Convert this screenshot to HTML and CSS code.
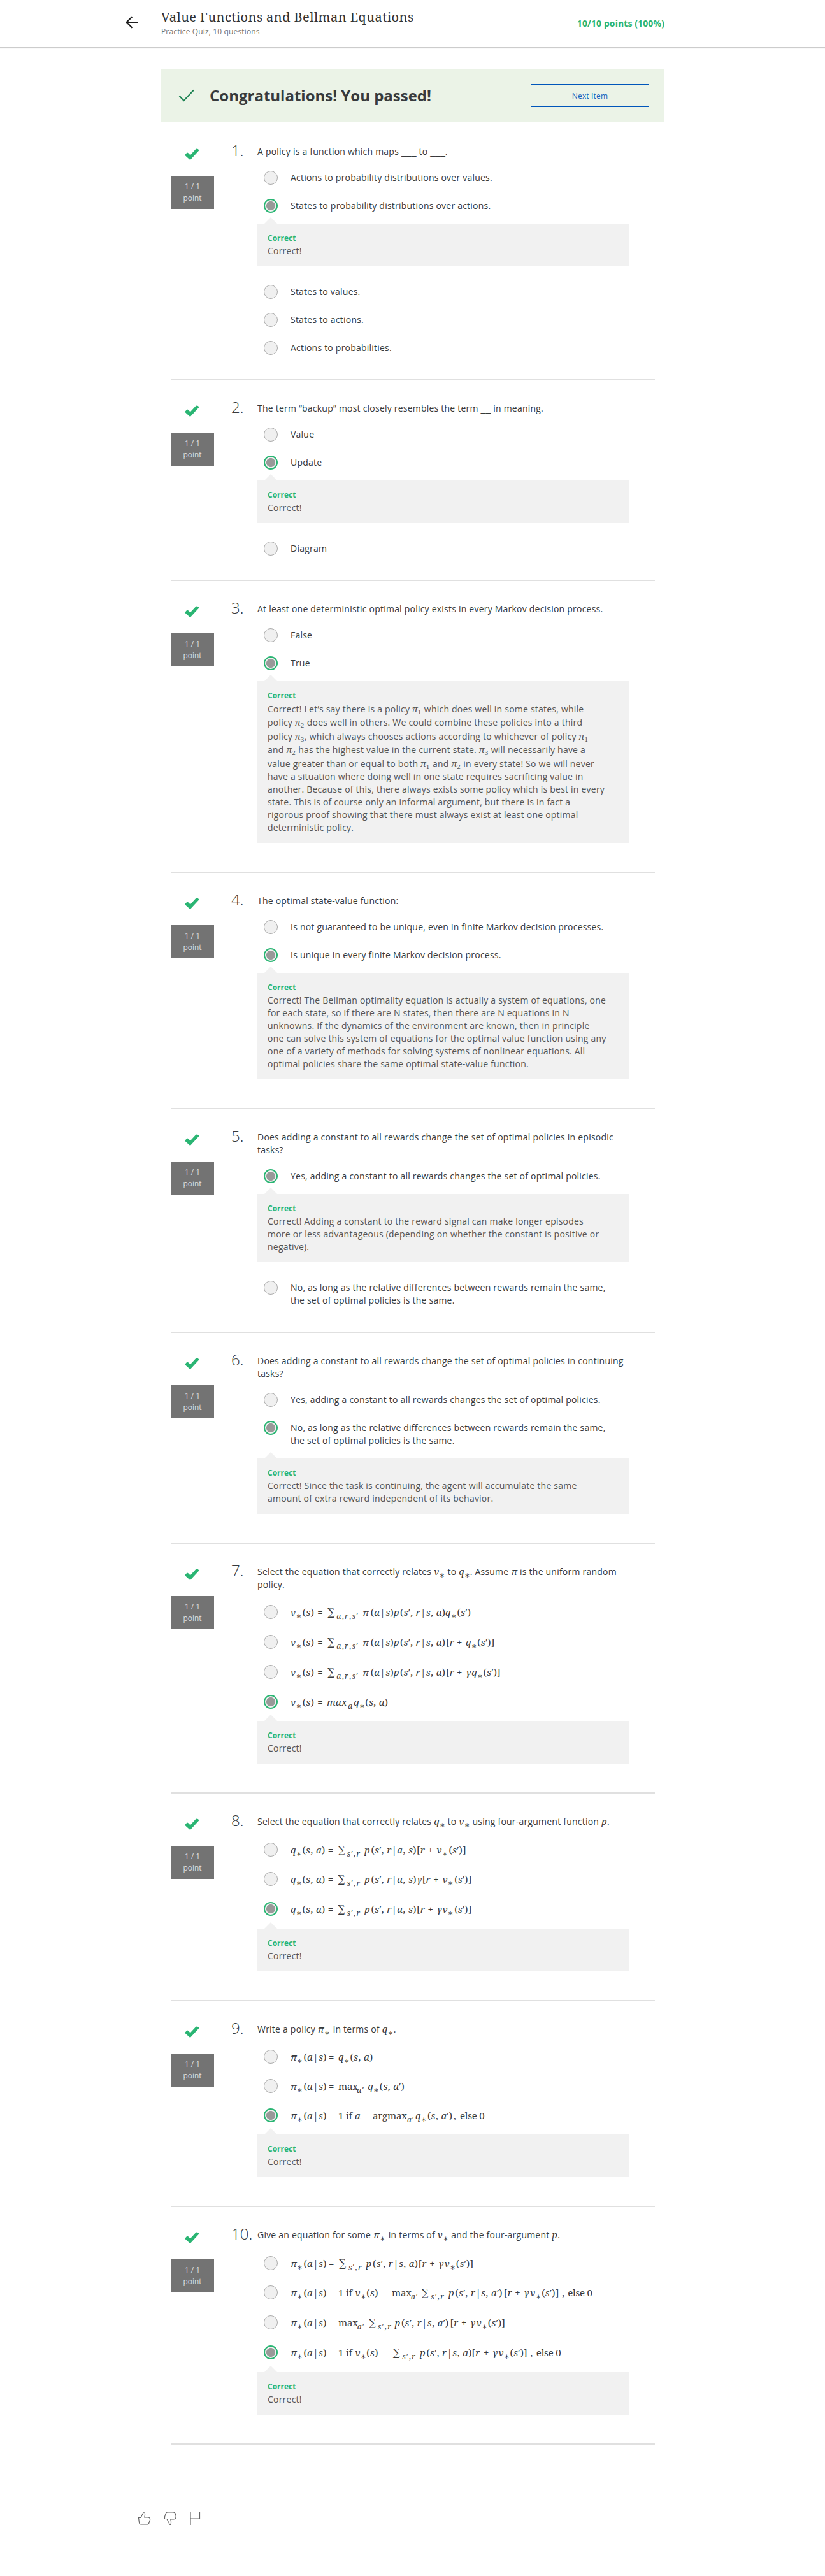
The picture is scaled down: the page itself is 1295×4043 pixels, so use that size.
FILE: index.html
```html
<!DOCTYPE html>
<html lang="en">
<head>
<meta charset="utf-8">
<title>Value Functions and Bellman Equations</title>
<link rel="stylesheet" href="styles.css">
</head>
<body>
<svg class="defs" aria-hidden="true">
  <symbol id="tick" viewBox="0 0 23 18"><path d="M0 10.5 3.6 6.6 Q5 6.2 8.6 10.6 L17.4 1 Q19.6-.4 22.8 2.8 L9.6 17 Q8.4 18 7.2 17 Z"/></symbol>
</svg>
<header class="top">
  <svg class="back" width="21" height="20" viewBox="0 0 21 20"><path d="M20 10H2M10.5 1.2 1.7 10l8.800 8.800" fill="none" stroke="#1f1f1f" stroke-width="2.200"/></svg>
  <div class="heading">
    <h1>Value Functions and Bellman Equations</h1>
    <p>Practice Quiz, 10 questions</p>
  </div>
  <div class="score">10/10 points (100%)</div>
</header>
<main>
<section class="banner">
  <svg width="26" height="20" viewBox="0 0 26 20"><path d="M1.500 10.500 8.500 18 24 1.500" fill="none" stroke="#1f8354" stroke-width="2"/></svg>
  <h2>Congratulations! You passed!</h2>
  <a class="next">Next Item</a>
</section>

<section class="question">
  <div class="grade"><svg class="tick"><use href="#tick"/></svg><div class="points">1 / 1<br>point</div></div>
  <div class="num">1.</div>
  <div class="body">
    <div class="prompt">A policy is a function which maps <span class="blank">___</span> to <span class="blank">___</span>.</div>
    <div class="option"><i></i><span>Actions to probability distributions over values.</span></div>
    <div class="option on"><i></i><span>States to probability distributions over actions.</span></div>
    <div class="feedback"><b>Correct</b><p>Correct!</p></div>
    <div class="option"><i></i><span>States to values.</span></div>
    <div class="option"><i></i><span>States to actions.</span></div>
    <div class="option"><i></i><span>Actions to probabilities.</span></div>
  </div>
</section>

<section class="question">
  <div class="grade"><svg class="tick"><use href="#tick"/></svg><div class="points">1 / 1<br>point</div></div>
  <div class="num">2.</div>
  <div class="body">
    <div class="prompt">The term “backup” most closely resembles the term <span class="blank">__</span> in meaning.</div>
    <div class="option"><i></i><span>Value</span></div>
    <div class="option on"><i></i><span>Update</span></div>
    <div class="feedback"><b>Correct</b><p>Correct!</p></div>
    <div class="option"><i></i><span>Diagram</span></div>
  </div>
</section>

<section class="question">
  <div class="grade"><svg class="tick"><use href="#tick"/></svg><div class="points">1 / 1<br>point</div></div>
  <div class="num">3.</div>
  <div class="body">
    <div class="prompt">At least one deterministic optimal policy exists in every Markov decision process.</div>
    <div class="option"><i></i><span>False</span></div>
    <div class="option on"><i></i><span>True</span></div>
    <div class="feedback"><b>Correct</b><p>Correct! Let’s say there is a policy <span class="pi">π<sub>1</sub></span> which does well in some states, while<br>policy <span class="pi">π<sub>2</sub></span> does well in others. We could combine these policies into a third<br>policy <span class="pi">π<sub>3</sub></span>, which always chooses actions according to whichever of policy <span class="pi">π<sub>1</sub></span><br>and <span class="pi">π<sub>2</sub></span> has the highest value in the current state. <span class="pi">π<sub>3</sub></span> will necessarily have a<br>value greater than or equal to both <span class="pi">π<sub>1</sub></span> and <span class="pi">π<sub>2</sub></span> in every state! So we will never<br>have a situation where doing well in one state requires sacrificing value in<br>another. Because of this, there always exists some policy which is best in every<br>state. This is of course only an informal argument, but there is in fact a<br>rigorous proof showing that there must always exist at least one optimal<br>deterministic policy.</p></div>
  </div>
</section>

<section class="question">
  <div class="grade"><svg class="tick"><use href="#tick"/></svg><div class="points">1 / 1<br>point</div></div>
  <div class="num">4.</div>
  <div class="body">
    <div class="prompt">The optimal state-value function:</div>
    <div class="option"><i></i><span>Is not guaranteed to be unique, even in finite Markov decision processes.</span></div>
    <div class="option on"><i></i><span>Is unique in every finite Markov decision process.</span></div>
    <div class="feedback"><b>Correct</b><p>Correct! The Bellman optimality equation is actually a system of equations, one<br>for each state, so if there are N states, then there are N equations in N<br>unknowns. If the dynamics of the environment are known, then in principle<br>one can solve this system of equations for the optimal value function using any<br>one of a variety of methods for solving systems of nonlinear equations. All<br>optimal policies share the same optimal state-value function.</p></div>
  </div>
</section>

<section class="question">
  <div class="grade"><svg class="tick"><use href="#tick"/></svg><div class="points">1 / 1<br>point</div></div>
  <div class="num">5.</div>
  <div class="body">
    <div class="prompt">Does adding a constant to all rewards change the set of optimal policies in episodic<br>tasks?</div>
    <div class="option on"><i></i><span>Yes, adding a constant to all rewards changes the set of optimal policies.</span></div>
    <div class="feedback"><b>Correct</b><p>Correct! Adding a constant to the reward signal can make longer episodes<br>more or less advantageous (depending on whether the constant is positive or<br>negative).</p></div>
    <div class="option"><i></i><span>No, as long as the relative differences between rewards remain the same,<br>the set of optimal policies is the same.</span></div>
  </div>
</section>

<section class="question">
  <div class="grade"><svg class="tick"><use href="#tick"/></svg><div class="points">1 / 1<br>point</div></div>
  <div class="num">6.</div>
  <div class="body">
    <div class="prompt">Does adding a constant to all rewards change the set of optimal policies in continuing<br>tasks?</div>
    <div class="option"><i></i><span>Yes, adding a constant to all rewards changes the set of optimal policies.</span></div>
    <div class="option on"><i></i><span>No, as long as the relative differences between rewards remain the same,<br>the set of optimal policies is the same.</span></div>
    <div class="feedback"><b>Correct</b><p>Correct! Since the task is continuing, the agent will accumulate the same<br>amount of extra reward independent of its behavior.</p></div>
  </div>
</section>

<section class="question tall">
  <div class="grade"><svg class="tick"><use href="#tick"/></svg><div class="points">1 / 1<br>point</div></div>
  <div class="num">7.</div>
  <div class="body">
    <div class="prompt">Select the equation that correctly relates <span class="tex">v_∗:17.5</span> to <span class="tex">q_∗:17.5</span>. Assume <span class="tex">π:10</span> is the uniform random<br>policy.</div>
    <div class="option"><i></i><span class="tex">v_∗:18.7 (s):23.6 =:16 ∑:14 _a,r,s′:41 π:12.4 (a|s):36 p:10.3 (s′,~r|s,~a):71 q_∗:18.5 (s′):26</span></div>
    <div class="option"><i></i><span class="tex">v_∗:18.7 (s):23.6 =:16 ∑:14 _a,r,s′:41 π:12.4 (a|s):36 p:10.3 (s′,~r|s,~a):72 [r:17 +:14 q_∗:18.2 (s′)]:31</span></div>
    <div class="option"><i></i><span class="tex">v_∗:18.7 (s):23.6 =:16 ∑:14 _a,r,s′:41 π:12.4 (a|s):36 p:10.3 (s′,~r|s,~a):72 [r:17 +:14 γ:9.3 q_∗:18.2 (s′)]:31</span></div>
    <div class="option on"><i></i><span class="tex">v_∗:18.7 (s):23.6 =:15 max:33 _a:9 q_∗:18 (s,~a):36</span></div>
    <div class="feedback"><b>Correct</b><p>Correct!</p></div>
  </div>
</section>

<section class="question tall">
  <div class="grade"><svg class="tick"><use href="#tick"/></svg><div class="points">1 / 1<br>point</div></div>
  <div class="num">8.</div>
  <div class="body">
    <div class="prompt">Select the equation that correctly relates <span class="tex">q_∗:17.5</span> to <span class="tex">v_∗:17.5</span> using four-argument function <span class="tex">p:9</span>.</div>
    <div class="option"><i></i><span class="tex">q_∗:18.5 (s,~a):40.300 =:15.700 ∑:14 _s′,r:27.500 p:10.500 (s′,~r|a,~s):71.500 [r:17.500 +:14.100 v_∗:18.800 (s′)]:31</span></div>
    <div class="option"><i></i><span class="tex">q_∗:18.5 (s,~a):40.300 =:15.700 ∑:14 _s′,r:27.500 p:10.500 (s′,~r|a,~s):71.500 γ:8.800 [r:17.500 +:14.100 v_∗:18.800 (s′)]:31</span></div>
    <div class="option on"><i></i><span class="tex">q_∗:18.5 (s,~a):40.300 =:15.700 ∑:14 _s′,r:27.500 p:10.500 (s′,~r|a,~s):71.500 [r:17.500 +:14.100 γ:8.800 v_∗:18.800 (s′)]:31</span></div>
    <div class="feedback"><b>Correct</b><p>Correct!</p></div>
  </div>
</section>

<section class="question tall short">
  <div class="grade"><svg class="tick"><use href="#tick"/></svg><div class="points">1 / 1<br>point</div></div>
  <div class="num">9.</div>
  <div class="body">
    <div class="prompt">Write a policy <span class="tex">π_∗:20</span> in terms of <span class="tex">q_∗:18</span>.</div>
    <div class="option"><i></i><span class="tex">π_∗:20.5 (a|s):39.500 =:15 q_∗:18.500 (s,~a):36</span></div>
    <div class="option"><i></i><span class="tex">π_∗:20.5 (a|s):39.500 =:15 !max:29.300 _a′:17 q_∗:18.500 (s,~a′):42</span></div>
    <div class="option on"><i></i><span class="tex">π_∗:20.5 (a|s):39.500 =:15 !1~if:26 a:13 =:15 !argmax:54 _a′:13 q_∗:19 (s,~a′):41 !,:10 !else~0:40</span></div>
    <div class="feedback"><b>Correct</b><p>Correct!</p></div>
  </div>
</section>

<section class="question tall">
  <div class="grade"><svg class="tick"><use href="#tick"/></svg><div class="points">1 / 1<br>point</div></div>
  <div class="num">10.</div>
  <div class="body">
    <div class="prompt">Give an equation for some <span class="tex">π_∗:20</span> in terms of <span class="tex">v_∗:17.5</span> and the four-argument <span class="tex">p:9</span>.</div>
    <div class="option"><i></i><span class="tex">π_∗:20.5 (a|s):39.500 =:16.300 ∑:14.600 _s′,r:27.700 p:10.500 (s′,~r|s,~a):71.600 [r:17.500 +:14 γ:9.700 v_∗:18 (s′)]:31</span></div>
    <div class="option"><i></i><span class="tex">π_∗:20.5 (a|s):39.500 =:15 !1~if:26.500 v_∗:17.800 (s):25.200 =:14.600 !max:29.800 _a′:16.700 ∑:14.600 _s′,r:27.800 p:10.400 (s′,~r|s,~a′):76.500 [r:17.500 +:14 γ:9.800 v_∗:18 (s′)]:32 !,:9 !else~0:40</span></div>
    <div class="option"><i></i><span class="tex">π_∗:20.5 (a|s):39.500 =:15 !max:29.800 _a′:18 ∑:14.300 _s′,r:26.500 p:10.400 (s′,~r|s,~a′):76.500 [r:17.500 +:14 γ:9.800 v_∗:18 (s′)]:32</span></div>
    <div class="option on"><i></i><span class="tex">π_∗:20.5 (a|s):39.500 =:15 !1~if:26.500 v_∗:17.800 (s):25.200 =:16.200 ∑:14.600 _s′,r:27.800 p:10.400 (s′,~r|s,~a):71 [r:18.500 +:14 γ:9.600 v_∗:18 (s′)]:32 !,:9.300 !else~0:40</span></div>
    <div class="feedback"><b>Correct</b><p>Correct!</p></div>
  </div>
</section>
</main>
<footer>
  <svg width="21" height="21" viewBox="0 0 21 21"><path d="M1.500 9.500H5L9 1.500Q9.800 0 10.800 1 12.300 3 10.800 9H17q3 .5 2.500 4L18 17.500Q17.300 20 15 20H5Q3 20 2.500 17.500Z"/></svg>
  <svg width="21" height="21" viewBox="0 0 21 21"><path d="M10.800 12H13Q16 12 18 11.500 20 9 18.500 4 17.800 1 15 1H6Q3.700 1 3 3.500L1.500 8V11.500H5L9 19.500Q9.800 21 10.800 20 12.300 18 10.800 12Z"/></svg>
  <svg width="17" height="21" viewBox="0 0 17 21"><path d="M1 21V.5H15.500V11H1"/></svg>
</footer>
<script src="math.js"></script>
</body>
</html>
```
FILE: math.js
```js
// Typesets each .tex element. Terms are separated by spaces and written "text:width";
// "_" starts a subscript, "~" is a space and a leading "!" makes the term upright.
document.querySelectorAll('.tex').forEach(function (node) {
  var terms = node.textContent.trim().split(/\s+/);
  node.textContent = '';
  terms.forEach(function (term) {
    var cut = term.lastIndexOf(':');
    var text = term.slice(0, cut).replace(/~/g, ' ');
    var box = document.createElement('span');
    box.className = 'term';
    box.style.width = term.slice(cut + 1) + 'px';
    if (text[0] === '!') {
      box.className += ' word';
      box.textContent = text.slice(1);
    } else {
      if (text === '∑') box.className += ' sum';
      var parts = text.split('_');
      append(box, parts[0]);
      if (parts[1]) {
        var sub = document.createElement('sub');
        if (parts[1] === '∗') sub.className = 'star';
        append(sub, parts[1]);
        box.appendChild(sub);
      }
    }
    node.appendChild(box);
  });
});

function append(parent, text) {
  (text.match(/[a-zπγ]+|[^a-zπγ]+/g) || []).forEach(function (run) {
    if (/[a-zπγ]/.test(run)) {
      var letter = document.createElement('em');
      letter.textContent = run;
      parent.appendChild(letter);
    } else {
      parent.appendChild(document.createTextNode(run));
    }
  });
}
```
FILE: styles.css
```css
* { box-sizing: border-box; }
body {
  margin: 0;
  background: #fff;
  color: #373a3c;
  font: 14px/20px "Open Sans", sans-serif;
}
h1, h2, p { margin: 0; }
.defs { display: none; }

.top {
  display: flex;
  height: 75px;
  padding: 13px 252px 0 197px;
  border-bottom: 1px solid #ccc;
  box-shadow: 0 1px 1px rgba(0, 0, 0, .12);
}
.back { margin: 12px 35px 0 0; }
.heading { flex: 1; }
.heading h1 {
  font: 400 20px/28px "Noto Serif", "DejaVu Serif Condensed", "DejaVu Serif", serif;
  letter-spacing: .46px;
  color: #333;
}
.heading p { font-size: 12px; line-height: 18px; letter-spacing: .15px; color: #757575; }
.score { margin-top: 14px; font-weight: 700; letter-spacing: .1px; color: #2ab573; }

.banner {
  display: flex;
  align-items: center;
  width: 790px;
  height: 84px;
  margin: 33px 0 2px 253px;
  padding: 0 24px 0 27px;
  background: #ebf3e7;
}
.banner h2 { flex: 1; margin-left: 23px; font-size: 24px; line-height: 30px; }
.next {
  width: 186px;
  height: 36px;
  border: 1px solid #0056bb;
  font-size: 12px;
  line-height: 35px;
  letter-spacing: .15px;
  text-align: center;
  color: #1565c0;
}

.question {
  display: flex;
  width: 760px;
  margin-left: 268px;
  padding: 34px 0 27px;
  border-bottom: 2px solid #e0e0e0;
}
.grade { width: 95px; flex: none; padding-top: 5px; }
.tick { display: block; width: 23px; height: 18px; margin: 0 0 25px 22px; fill: #2ab573; }
.points {
  width: 68px;
  height: 52px;
  padding-top: 8px;
  background: #737373;
  color: #ddd;
  font-size: 12px;
  line-height: 18px;
  text-align: center;
}
.num { width: 41px; flex: none; margin-top: -2px; font-size: 24px; line-height: 20px; font-weight: 300; white-space: nowrap; }
.body { width: 584px; flex: none; letter-spacing: .22px; }
.prompt { padding-bottom: 9px; white-space: nowrap; }
.blank { font-size: 18px; line-height: 0; letter-spacing: 0; }
.option { display: flex; min-height: 44px; padding: 12px 0; white-space: nowrap; }
.option i {
  width: 22px;
  height: 22px;
  margin: -1px 20px -1px 10px;
  flex: none;
  border: 1px solid #aaa;
  border-radius: 50%;
  background: #f0f0f0;
}
.option.on i {
  border: 2px solid #2ab573;
  background: radial-gradient(circle at center, #999 6.600px, #f0f0f0 7.400px) padding-box;
}
.feedback {
  position: relative;
  margin: 6px 0 18px;
  padding: 13px 16px 14px;
  background: #f1f1f1;
  white-space: nowrap;
}
.feedback::before {
  content: "";
  position: absolute;
  left: 11px;
  top: -10px;
  border: solid transparent;
  border-width: 0 10px 10px;
  border-bottom-color: #f1f1f1;
}
.feedback b { display: block; font-size: 12px; letter-spacing: 0; color: #2ab573; }
.feedback p { color: #555; }

.pi { display: inline-block; width: 15px; height: 21.400px; font: italic 17.500px/20px "Liberation Serif", serif; letter-spacing: 0; }
.pi sub { font-size: 11px; font-style: normal; line-height: 0; vertical-align: -3px; }

.tex {
  font: 15px/20px "Noto Serif", "DejaVu Serif Condensed", "DejaVu Serif", serif;
  letter-spacing: .4px;
  white-space: nowrap;
}
.prompt .tex { line-height: 0; }
.term { display: inline-block; height: 20px; line-height: 20px; vertical-align: top; white-space: pre; }
.prompt .term { margin-top: -1px; }
.tex .word { letter-spacing: -.2px; }
.term sub { font-size: 12px; line-height: 0; vertical-align: -5px; letter-spacing: 1.400px; }
.term .star { font-size: 14px; vertical-align: -5px; }
.sum { font-size: 17px; }
.tall .option { height: 46.700px; }
.short .option { height: 46px; min-height: 0; }
.tall .prompt { padding-bottom: 11.500px; }

footer {
  display: flex;
  gap: 20px;
  width: 930px;
  height: 127px;
  margin: 80px 0 0 183px;
  padding: 24px 33px;
  border-top: 1px solid #ccc;
}
footer path { fill: none; stroke: #666; stroke-width: 1.200; }
```
